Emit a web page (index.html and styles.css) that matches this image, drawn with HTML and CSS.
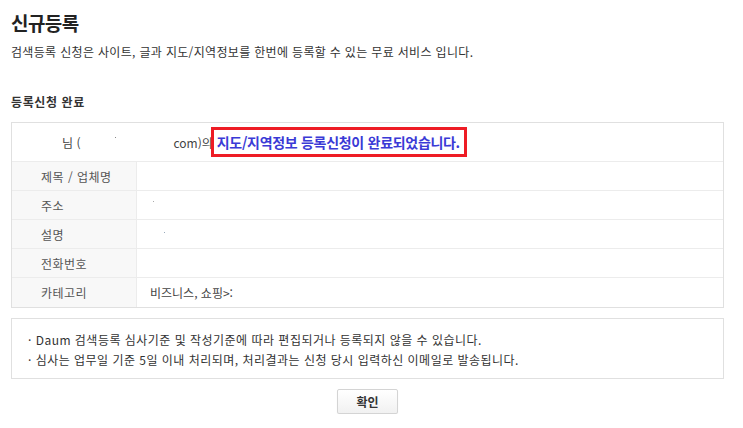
FILE: index.html
```html
<!DOCTYPE html>
<html lang="ko">
<head>
<meta charset="utf-8">
<title>신규등록</title>
<link rel="stylesheet" href="styles.css">
</head>
<body>
<div class="page">
  <h1 class="title">신규등록</h1>
  <p class="desc">검색등록 신청은 사이트, 글과 지도/지역정보를 한번에 등록할 수 있는 무료 서비스 입니다.</p>
  <h2 class="sub">등록신청 완료</h2>
  <div class="result">
    <div class="result-head">
      <span class="who">님 (</span><span class="mask"><span class="dot"></span></span><span class="who">com)의</span><span class="hl">지도/지역정보 등록신청이 완료되었습니다.</span>
    </div>
    <div class="row"><div class="label">제목 / 업체명</div><div class="value"></div></div>
    <div class="row"><div class="label">주소</div><div class="value"><span class="speck"></span></div></div>
    <div class="row"><div class="label">설명</div><div class="value"><span class="speck speck-b"></span></div></div>
    <div class="row"><div class="label">전화번호</div><div class="value"></div></div>
    <div class="row"><div class="label">카테고리</div><div class="value">비즈니스, 쇼핑&gt;<span class="cut">:</span></div></div>
  </div>
  <div class="notice">
    <p>· Daum 검색등록 심사기준 및 작성기준에 따라 편집되거나 등록되지 않을 수 있습니다.</p>
    <p>· 심사는 업무일 기준 5일 이내 처리되며, 처리결과는 신청 당시 입력하신 이메일로 발송됩니다.</p>
  </div>
  <div class="actions"><button class="btn" type="button">확인</button></div>
</div>
</body>
</html>
```
FILE: styles.css
```css
* { box-sizing: border-box; }
html, body { margin: 0; padding: 0; background: #fff; }
body {
  font-family: "Noto Sans CJK KR", "Noto Sans", sans-serif;
  color: #333;
  font-size: 12px;
}
.page {
  width: 713px;
  margin-left: 11px;
  padding-top: 9px;
}
.title {
  margin: 0;
  font-size: 19px;
  line-height: 28px;
  font-weight: 700;
  color: #222;
  letter-spacing: -0.6px;
}
.desc {
  margin: 7px 0 0;
  font-size: 12px;
  line-height: 16px;
  color: #333;
  letter-spacing: 0.33px;
}
.sub {
  margin: 34px 0 0;
  font-size: 12px;
  line-height: 16px;
  font-weight: 700;
  color: #333;
  letter-spacing: 0.6px;
}
.result {
  margin-top: 12px;
  border: 1px solid #e0e0e0;
}
.result-head {
  height: 39px;
  display: flex;
  align-items: center;
  padding-left: 50px;
  border-bottom: 1px solid #ececec;
  font-size: 12px;
  color: #444;
  white-space: nowrap;
}
.mask {
  display: inline-block;
  width: 93px;
  height: 14px;
  position: relative;
}
.dot {
  position: absolute;
  left: 35px;
  top: 2px;
  width: 1px;
  height: 1px;
  background: #888;
}
.hl {
  display: inline-block;
  flex: none;
  margin-left: -2px;
  border: 3px solid #ee1c25;
  height: 30px;
  width: 256px;
  line-height: 24px;
  padding-left: 3px;
  font-size: 14px;
  font-weight: 700;
  color: #3a3ad6;
  letter-spacing: -0.3px;
  white-space: nowrap;
  overflow: hidden;
  background: #fff;
}
.row {
  display: grid;
  grid-template-columns: 125px 1fr;
  height: 29px;
  border-bottom: 1px solid #ececec;
}
.row:last-child { border-bottom: 0; }
.label {
  background: #f8f8f8;
  border-right: 1px solid #ececec;
  padding-left: 29px;
  display: flex;
  align-items: center;
  color: #555;
  letter-spacing: 0.5px;
}
.value {
  display: flex;
  align-items: center;
  padding-left: 13px;
  color: #444;
  position: relative;
}
.speck {
  position: absolute;
  left: 16px;
  top: 10px;
  width: 1px;
  height: 1px;
  background: #aaa;
}
.speck-b { left: 27px; top: 12px; background: #9ab; }
.cut { display: inline-block; width: 3px; overflow: hidden; }
.notice {
  margin-top: 10px;
  border: 1px solid #e0e0e0;
  height: 61px;
  padding: 11px 0 0 16px;
}
.notice p {
  margin: 0;
  font-size: 12px;
  line-height: 20px;
  color: #333;
  letter-spacing: 0.48px;
}
.actions {
  display: flex;
  justify-content: center;
  margin-top: 10px;
}
.btn {
  width: 61px;
  height: 25px;
  border: 1px solid #d4d4d4;
  border-radius: 2px;
  background: linear-gradient(#ffffff, #f1f1f1);
  font-family: inherit;
  font-size: 12px;
  font-weight: 700;
  color: #333;
  padding: 0;
  box-shadow: 0 1px 1px rgba(0,0,0,0.08);
}
```
